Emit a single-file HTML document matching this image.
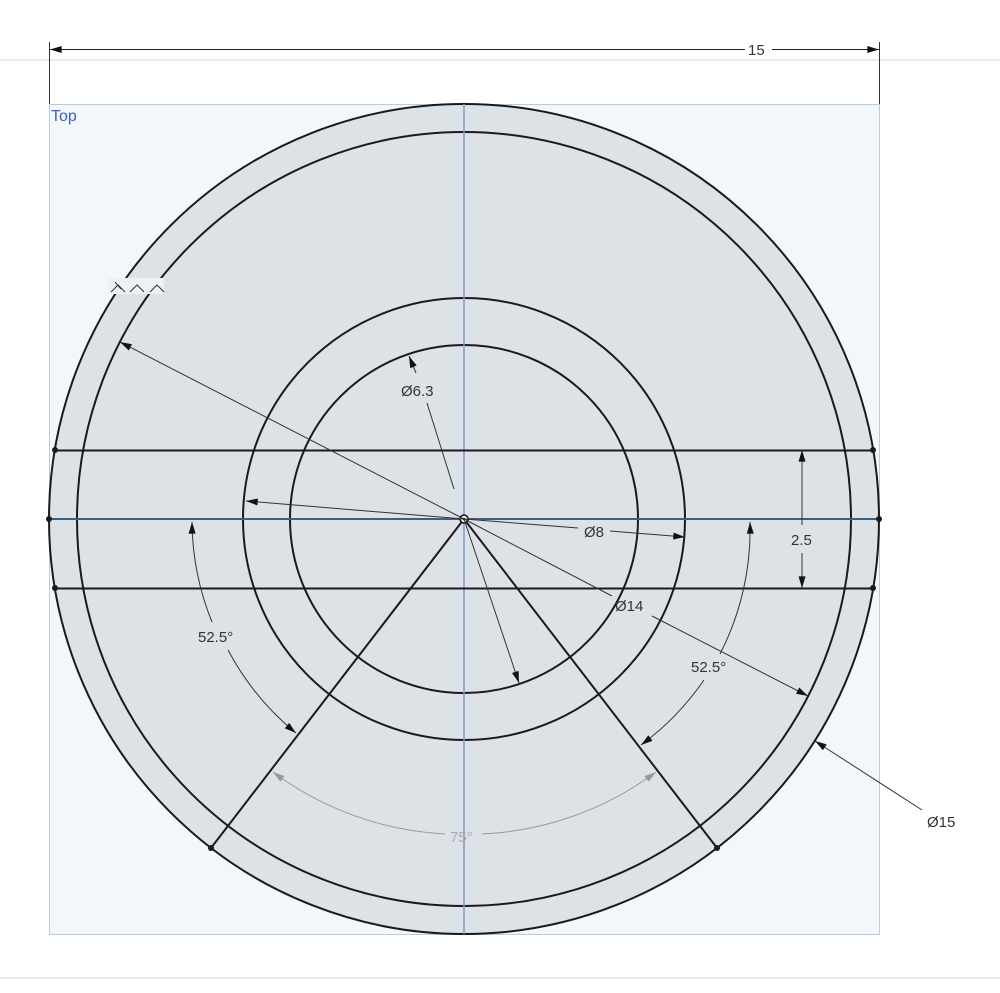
<!DOCTYPE html><html><head><style>body{margin:0;background:#fff}svg{display:block}text{font-family:"Liberation Sans",sans-serif;font-size:15px;fill:#333}</style></head><body>
<svg width="1000" height="993" viewBox="0 0 1000 993">
<defs><marker id="a" viewBox="0 0 10 6" refX="10" refY="3" markerWidth="14" markerHeight="7" orient="auto-start-reverse"><path d="M0 0L10 3L0 6z" fill="#111"/></marker>
<marker id="g" viewBox="0 0 10 6" refX="10" refY="3" markerWidth="14" markerHeight="7" orient="auto-start-reverse"><path d="M0 0L10 3L0 6z" fill="#999"/></marker></defs>
<line x1="0" y1="60" x2="1000" y2="60" stroke="#c9dde8"/>
<line x1="0" y1="978" x2="1000" y2="978" stroke="#c9dde8"/>
<rect x="49.5" y="104.5" width="830" height="830" fill="#f4f7f9" stroke="#b9cbdc"/>
<text x="51" y="121" style="fill:#3a63b5;font-size:16px">Top</text>
<line x1="49.5" y1="42" x2="49.5" y2="104" stroke="#333"/><line x1="879.5" y1="42" x2="879.5" y2="104" stroke="#333"/>
<line x1="50" y1="49.5" x2="745" y2="49.5" stroke="#222" marker-start="url(#a)"/><line x1="772" y1="49.5" x2="879" y2="49.5" stroke="#222" marker-end="url(#a)"/>
<text x="748" y="55">15</text>
<circle cx="464" cy="519" r="415" fill="#dde2e7" stroke="#1a1a1a" stroke-width="2"/>
<circle cx="464" cy="519" r="387" fill="none" stroke="#1a1a1a" stroke-width="2"/>
<circle cx="464" cy="519" r="221" fill="none" stroke="#1a1a1a" stroke-width="2"/>
<circle cx="464" cy="519" r="174" fill="none" stroke="#1a1a1a" stroke-width="2"/>
<line x1="464" y1="104" x2="464" y2="934" stroke="#7b9ccc" stroke-width="1.5"/>
<line x1="49" y1="519" x2="879" y2="519" stroke="#3f5f86" stroke-width="2"/>
<line x1="55" y1="450.5" x2="873" y2="450.5" stroke="#1a1a1a" stroke-width="2"/>
<line x1="55" y1="588.5" x2="873" y2="588.5" stroke="#1a1a1a" stroke-width="2"/>
<line x1="464" y1="519" x2="211" y2="848" stroke="#1a1a1a" stroke-width="2"/>
<line x1="464" y1="519" x2="717" y2="848" stroke="#1a1a1a" stroke-width="2"/>
<g fill="#1a1a1a"><circle cx="55" cy="450" r="3"/><circle cx="873" cy="450" r="3"/><circle cx="55" cy="588" r="3"/><circle cx="873" cy="588" r="3"/><circle cx="49" cy="519" r="3"/><circle cx="879" cy="519" r="3"/><circle cx="211" cy="848" r="3"/><circle cx="717" cy="848" r="3"/></g>
<circle cx="464" cy="519" r="4" fill="#fff" stroke="#111" stroke-width="1.5"/><circle cx="464" cy="519" r="1.3" fill="#111"/>
<g stroke="#333" stroke-width="1" fill="none">
<line x1="464" y1="519" x2="120" y2="342" marker-end="url(#a)"/>
<line x1="464" y1="519" x2="612" y2="596"/><line x1="652" y1="616" x2="808" y2="696" marker-end="url(#a)"/>
<line x1="464" y1="519" x2="246" y2="501" marker-end="url(#a)"/>
<line x1="464" y1="519" x2="578" y2="528"/><line x1="610" y1="531" x2="685" y2="537" marker-end="url(#a)"/>
<line x1="454" y1="489" x2="427" y2="403"/><line x1="416" y1="373" x2="409" y2="356" marker-end="url(#a)"/>
<line x1="464" y1="519" x2="519" y2="683" marker-end="url(#a)"/>
<line x1="922" y1="810" x2="815" y2="741" marker-end="url(#a)"/>
<line x1="802" y1="525" x2="802" y2="450" marker-end="url(#a)"/><line x1="802" y1="553" x2="802" y2="588" marker-end="url(#a)"/>
<path d="M212 622 A272 272 0 0 1 192 522" marker-end="url(#a)"/>
<path d="M228 650 A272 272 0 0 0 296 733" marker-end="url(#a)"/>
<path d="M720 654 A272 272 0 0 0 750 522" marker-end="url(#a)"/>
<path d="M704 680 A272 272 0 0 1 641 745" marker-end="url(#a)"/>
<path d="M445 834 A316 316 0 0 1 273 772" stroke="#999" marker-end="url(#g)"/>
<path d="M482 834 A316 316 0 0 0 656 772" stroke="#999" marker-end="url(#g)"/>
</g>
<text x="401" y="396">Ø6.3</text><text x="584" y="537">Ø8</text><text x="615" y="611">Ø14</text><text x="927" y="827">Ø15</text>
<text x="791" y="545">2.5</text><text x="198" y="642">52.5°</text><text x="691" y="672">52.5°</text><text x="450" y="842" style="fill:#aaa">75°</text>
<rect x="108" y="278" width="56" height="16" fill="#eef1f3"/>
<g stroke="#333" fill="none"><path d="M111 292l7-7 7 7M115 282l6 7"/><path d="M130 292l7-7 7 7"/><path d="M150 292l7-7 7 7M154 282l0 0"/></g>
</svg></body></html>
